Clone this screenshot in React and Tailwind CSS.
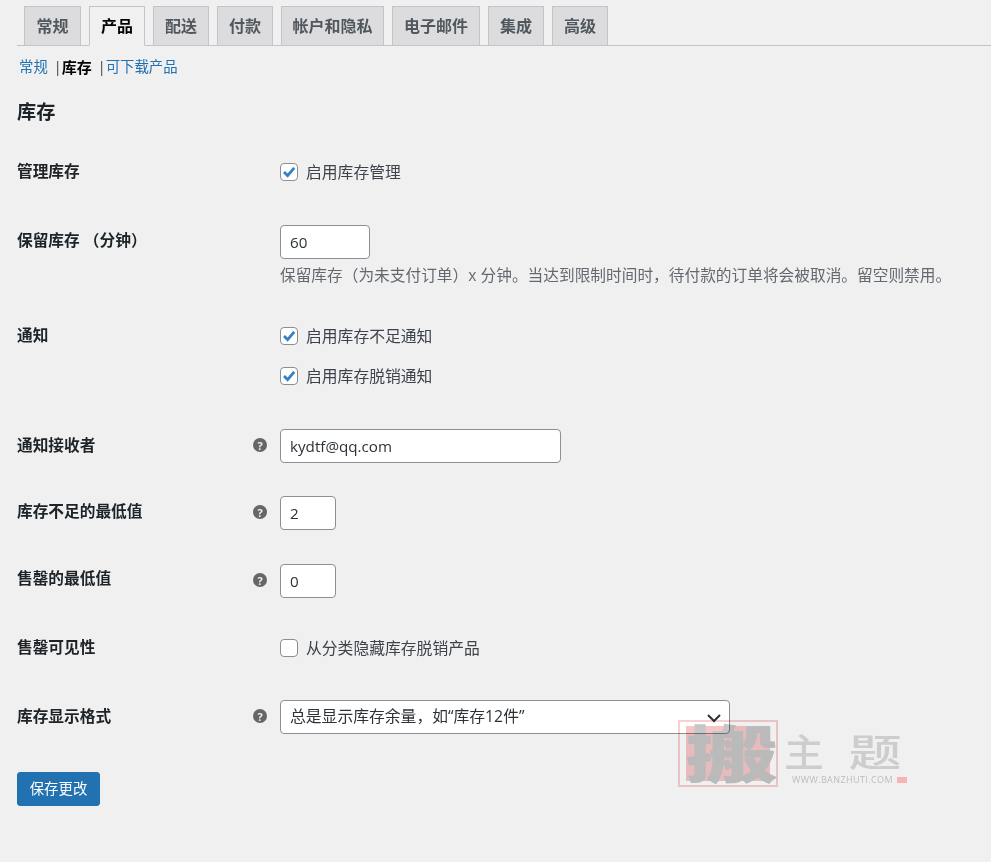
const FONT = { fontFamily: '"Open Sans", "Noto Sans CJK SC", sans-serif' };

const tabs = [
  { name: "常规", w: "w-[57px]" },
  { name: "产品", w: "w-[56px]", active: true },
  { name: "配送", w: "w-[56px]" },
  { name: "付款", w: "w-[56px]" },
  { name: "帐户和隐私", w: "w-[103px]" },
  { name: "电子邮件", w: "w-[88px]" },
  { name: "集成", w: "w-[56px]" },
  { name: "高级", w: "w-[56px]" },
];

function Checkbox({ checked, label }) {
  return (
    <label className="flex items-center gap-[8px] h-[24px] text-[15.8px] text-[#3c434a]">
      <span className="flex items-center justify-center w-[18px] h-[18px] bg-white border border-[#8c8f94] rounded-[4px]">
        {checked && (
          <svg width="16" height="16" viewBox="0 0 16 16">
            <path d="M3 8 L6.6 11.6 L13.2 3.8" fill="none" stroke="#3582c4" strokeWidth="2.8" />
          </svg>
        )}
      </span>
      <span className="mt-[2px]">{label}</span>
    </label>
  );
}

function Field({ value, w }) {
  return (
    <input
      readOnly
      value={value}
      className={`${w} h-[34px] px-[9px] bg-white border border-[#8c8f94] rounded-[4px] text-[15.2px] text-[#2c3338]`}
    />
  );
}

function Row({ h, label, help, labelPt, fieldPt, children }) {
  return (
    <div className={`flex items-start ${h}`}>
      <div className={`w-[236px] shrink-0 ${labelPt} text-[15.7px] leading-[24px] font-semibold text-[#1d2327]`}>{label}</div>
      <div className={`w-[27px] shrink-0 ${fieldPt}`}>
        {help && (
          <span className="mt-[9px] flex items-center justify-center w-[14px] h-[14px] rounded-full bg-[#666] text-[#f0f0f1] text-[11px] leading-none font-bold">?</span>
        )}
      </div>
      <div className={fieldPt}>{children}</div>
    </div>
  );
}

export default function App() {
  return (
    <div className="relative min-h-screen overflow-hidden bg-[#f0f0f1]" style={FONT}>
      <div className="pl-[17px]">
        {/* Tabs */}
        <nav className="flex gap-2 pt-[6px] pl-[7px] border-b border-[#c3c4c7]">
          {tabs.map((t) => (
            <a
              key={t.name}
              className={`${t.w} h-[39px] flex items-center justify-center border border-[#c3c4c7] text-[16px] font-semibold ${
                t.active ? "bg-[#f0f0f1] text-black border-b-[#f0f0f1] h-[40px] -mb-px" : "bg-[#dcdcde] text-[#50575e] border-b-0"
              }`}
            >
              {t.name}
            </a>
          ))}
        </nav>

        {/* Sub links */}
        <div className="flex items-center h-[20px] mt-[11px] ml-[2px] text-[14.4px] text-[#3c434a]">
          <a className="text-[#2271b1]">常规</a>
          <span className="ml-[6px]">|</span>
          <span className="font-semibold text-black text-[15px]">库存</span>
          <span className="ml-[6px]">|</span>
          <a className="text-[#2271b1]">可下载产品</a>
        </div>

        <h2 className="mt-[22px] h-[26px] text-[19.2px] leading-[26px] font-semibold text-[#1d2327]">库存</h2>

        <div className="mt-[25px]">
          <Row h="h-[60px]" label="管理库存" labelPt="pt-[9px]" fieldPt="pt-[10px]">
            <Checkbox checked label="启用库存管理" />
          </Row>
          <Row h="h-[104px]" label="保留库存 （分钟）" labelPt="pt-[18px]" fieldPt="pt-[15px]">
            <Field value="60" w="w-[90px]" />
            <p className="mt-[4px] whitespace-nowrap text-[15.7px] leading-[24px] text-[#646970]">
              保留库存（为未支付订单）x 分钟。当达到限制时间时，待付款的订单将会被取消。留空则禁用。
            </p>
          </Row>
          <Row h="h-[100px]" label="通知" labelPt="pt-[9px]" fieldPt="pt-[10px]">
            <Checkbox checked label="启用库存不足通知" />
            <div className="mt-[16px]">
              <Checkbox checked label="启用库存脱销通知" />
            </div>
          </Row>
          <Row h="h-[67px]" label="通知接收者" help labelPt="pt-[19px]" fieldPt="pt-[15px]">
            <Field value="kydtf@qq.com" w="w-[281px]" />
          </Row>
          <Row h="h-[68px]" label="库存不足的最低值" help labelPt="pt-[18px]" fieldPt="pt-[15px]">
            <Field value="2" w="w-[56px]" />
          </Row>
          <Row h="h-[77px]" label="售罄的最低值" help labelPt="pt-[17px]" fieldPt="pt-[15px]">
            <Field value="0" w="w-[56px]" />
          </Row>
          <Row h="h-[59px]" label="售罄可见性" labelPt="pt-[9px]" fieldPt="pt-[10px]">
            <Checkbox label="从分类隐藏库存脱销产品" />
          </Row>
          <Row h="h-[87px]" label="库存显示格式" help labelPt="pt-[19px]" fieldPt="pt-[15px]">
            <div className="relative w-[450px] h-[34px] flex items-center pl-[9px] bg-white border border-[#8c8f94] rounded-[4px] text-[15.8px] text-[#2c3338]">
              总是显示库存余量，如“库存12件”
              <svg className="absolute right-[7px] top-[9px]" width="16" height="16" viewBox="0 0 16 16">
                <path d="M2 5 L8 11 L14 5" fill="none" stroke="#2c3338" strokeWidth="2" />
              </svg>
            </div>
          </Row>
        </div>

        <button className="block w-[83px] h-[34px] bg-[#2271b1] border border-[#2271b1] rounded-[3px] text-white text-[14.4px]">
          保存更改
        </button>
      </div>

      {/* Watermark */}
      <div className="absolute left-[678px] top-[720px] w-[100px] h-[67px] border-2 border-[#f7d0d0] mix-blend-multiply pointer-events-none flex items-center justify-center">
        <div className="w-[84px] h-[55px] bg-[#f6c6c6]" />
        <span className="absolute left-[4px] top-0 bottom-0 right-[-4px] flex items-center justify-center text-[62px] leading-none font-black text-[#c6c6c6] scale-x-[1.5]">搬</span>
      </div>
      <div className="absolute left-[785px] top-[731px] flex gap-[33px] text-[38px] leading-[40px] font-medium text-[#cdcdcd] pointer-events-none">
        <span className="scale-x-[1.05]">主</span>
        <span className="scale-x-[1.4]">题</span>
      </div>
      <div className="absolute left-[792px] top-[774px] flex items-center gap-[4px] text-[9px] leading-[11px] tracking-[0.4px] text-[#bdbdbd] pointer-events-none">
        WWW.BANZHUTI.COM
        <span className="w-[10px] h-[6px] bg-[#f5b5b5]" />
      </div>
    </div>
  );
}
